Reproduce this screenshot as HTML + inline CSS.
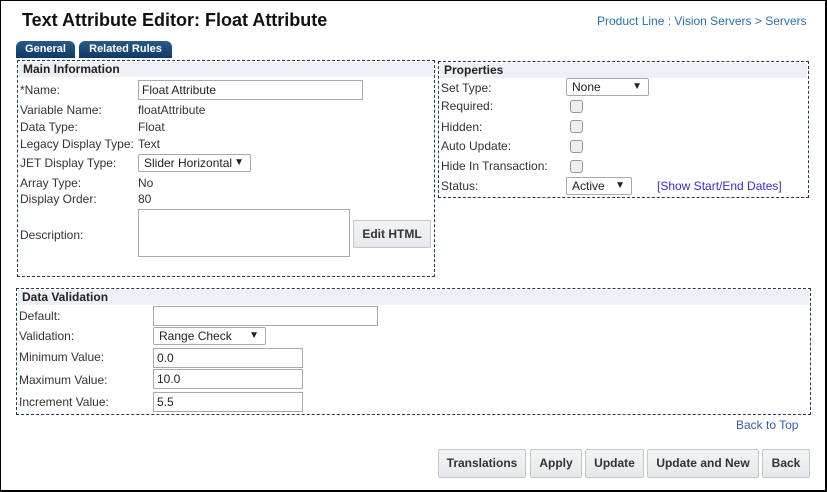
<!DOCTYPE html>
<html><head><style>
*{box-sizing:border-box;margin:0;padding:0}
body{width:827px;height:492px;position:relative;background:#fff;font-family:"Liberation Sans",Arial,sans-serif;font-size:12px;color:#333;overflow:hidden}
.a{position:absolute;white-space:nowrap}
#frame{position:absolute;left:0;top:0;width:827px;height:492px;border:1px solid #000;border-bottom-width:2px;border-right-width:2px}
.box{position:absolute;border:1px dashed #1f3a60}
.hd{position:absolute;left:1px;right:1px;top:1px;height:15px;background:#eef0f5;font-weight:bold;font-size:12px;color:#222;padding-left:4px;line-height:15px}
.in{position:absolute;border:1px solid #a9a9a9;background:#fff;padding-left:3px;font-size:12px;line-height:18px;color:#222}
.sel{position:absolute;border:1px solid #a9a9a9;background:#fff;padding-left:5px;font-size:12px;color:#222;line-height:16px;border-radius:2px}
.sel:after{content:"▼";position:absolute;right:6px;top:0;font-size:10px}
.cb{position:absolute;width:13px;height:13px;border:1px solid #999;border-radius:3px;background:#eee}
.btn{position:absolute;border:1px solid #c4c8cd;background:linear-gradient(#f3f4f6,#e6e8eb);border-radius:2px;font-weight:bold;font-size:12px;color:#333;text-align:center}
.tab{position:absolute;top:41px;height:17px;background:linear-gradient(#2a5a8a,#0f3a66);color:#fff;font-weight:bold;font-size:11px;text-align:center;line-height:16px;border-radius:6px 6px 0 0}
</style></head><body>
<div id="frame"></div>
<div class="a" style="left:22px;top:10px;font-size:18px;font-weight:bold;color:#111">Text Attribute Editor: Float Attribute</div>
<div class="a" style="left:597px;top:14px;color:#2a6fb0">Product Line : Vision Servers &gt; Servers</div>
<div class="tab" style="left:16px;width:59px">General</div>
<div class="tab" style="left:79px;width:93px">Related Rules</div>

<div class="box" style="left:17px;top:60px;width:418px;height:217px"><div class="hd">Main Information</div></div>
<div class="a" style="left:20px;top:83px">*Name:</div>
<div class="in" style="left:138px;top:80px;width:225px;height:20px">Float Attribute</div>
<div class="a" style="left:20px;top:103px">Variable Name:</div><div class="a" style="left:138px;top:103px">floatAttribute</div>
<div class="a" style="left:20px;top:120px">Data Type:</div><div class="a" style="left:138px;top:120px">Float</div>
<div class="a" style="left:20px;top:137px">Legacy Display Type:</div><div class="a" style="left:138px;top:137px">Text</div>
<div class="a" style="left:20px;top:156px">JET Display Type:</div>
<div class="sel" style="left:138px;top:154px;width:113px;height:18px">Slider Horizontal</div>
<div class="a" style="left:20px;top:176px">Array Type:</div><div class="a" style="left:138px;top:176px">No</div>
<div class="a" style="left:20px;top:192px">Display Order:</div><div class="a" style="left:138px;top:192px">80</div>
<div class="a" style="left:20px;top:228px">Description:</div>
<div class="in" style="left:138px;top:209px;width:212px;height:48px"></div>
<div class="btn" style="left:353px;top:220px;width:78px;height:28px;line-height:26px">Edit HTML</div>

<div class="box" style="left:438px;top:61px;width:371px;height:137px"><div class="hd">Properties</div></div>
<div class="a" style="left:441px;top:81px">Set Type:</div>
<div class="sel" style="left:566px;top:78px;width:83px;height:18px">None</div>
<div class="a" style="left:441px;top:99px">Required:</div><div class="cb" style="left:570px;top:100px"></div>
<div class="a" style="left:441px;top:120px">Hidden:</div><div class="cb" style="left:570px;top:120px"></div>
<div class="a" style="left:441px;top:139px">Auto Update:</div><div class="cb" style="left:570px;top:140px"></div>
<div class="a" style="left:441px;top:159px">Hide In Transaction:</div><div class="cb" style="left:570px;top:160px"></div>
<div class="a" style="left:441px;top:179px">Status:</div>
<div class="sel" style="left:566px;top:177px;width:66px;height:18px">Active</div>
<div class="a" style="left:657px;top:179px;color:#3b2ad0">[Show Start/End Dates]</div>

<div class="box" style="left:16px;top:288px;width:795px;height:127px"><div class="hd">Data Validation</div></div>
<div class="a" style="left:19px;top:309px">Default:</div>
<div class="in" style="left:153px;top:306px;width:225px;height:20px"></div>
<div class="a" style="left:19px;top:329px">Validation:</div>
<div class="sel" style="left:153px;top:327px;width:113px;height:18px">Range Check</div>
<div class="a" style="left:19px;top:350px">Minimum Value:</div>
<div class="in" style="left:153px;top:348px;width:150px;height:20px">0.0</div>
<div class="a" style="left:19px;top:373px">Maximum Value:</div>
<div class="in" style="left:153px;top:369px;width:150px;height:20px">10.0</div>
<div class="a" style="left:19px;top:395px">Increment Value:</div>
<div class="in" style="left:153px;top:392px;width:150px;height:20px">5.5</div>

<div class="a" style="left:736px;top:418px;color:#3a5aa8">Back to Top</div>
<div class="btn" style="left:438px;top:449px;width:88px;height:29px;line-height:27px">Translations</div>
<div class="btn" style="left:530px;top:449px;width:52px;height:29px;line-height:27px">Apply</div>
<div class="btn" style="left:585px;top:449px;width:59px;height:29px;line-height:27px">Update</div>
<div class="btn" style="left:647px;top:449px;width:112px;height:29px;line-height:27px">Update and New</div>
<div class="btn" style="left:762px;top:449px;width:48px;height:29px;line-height:27px">Back</div>
</body></html>
